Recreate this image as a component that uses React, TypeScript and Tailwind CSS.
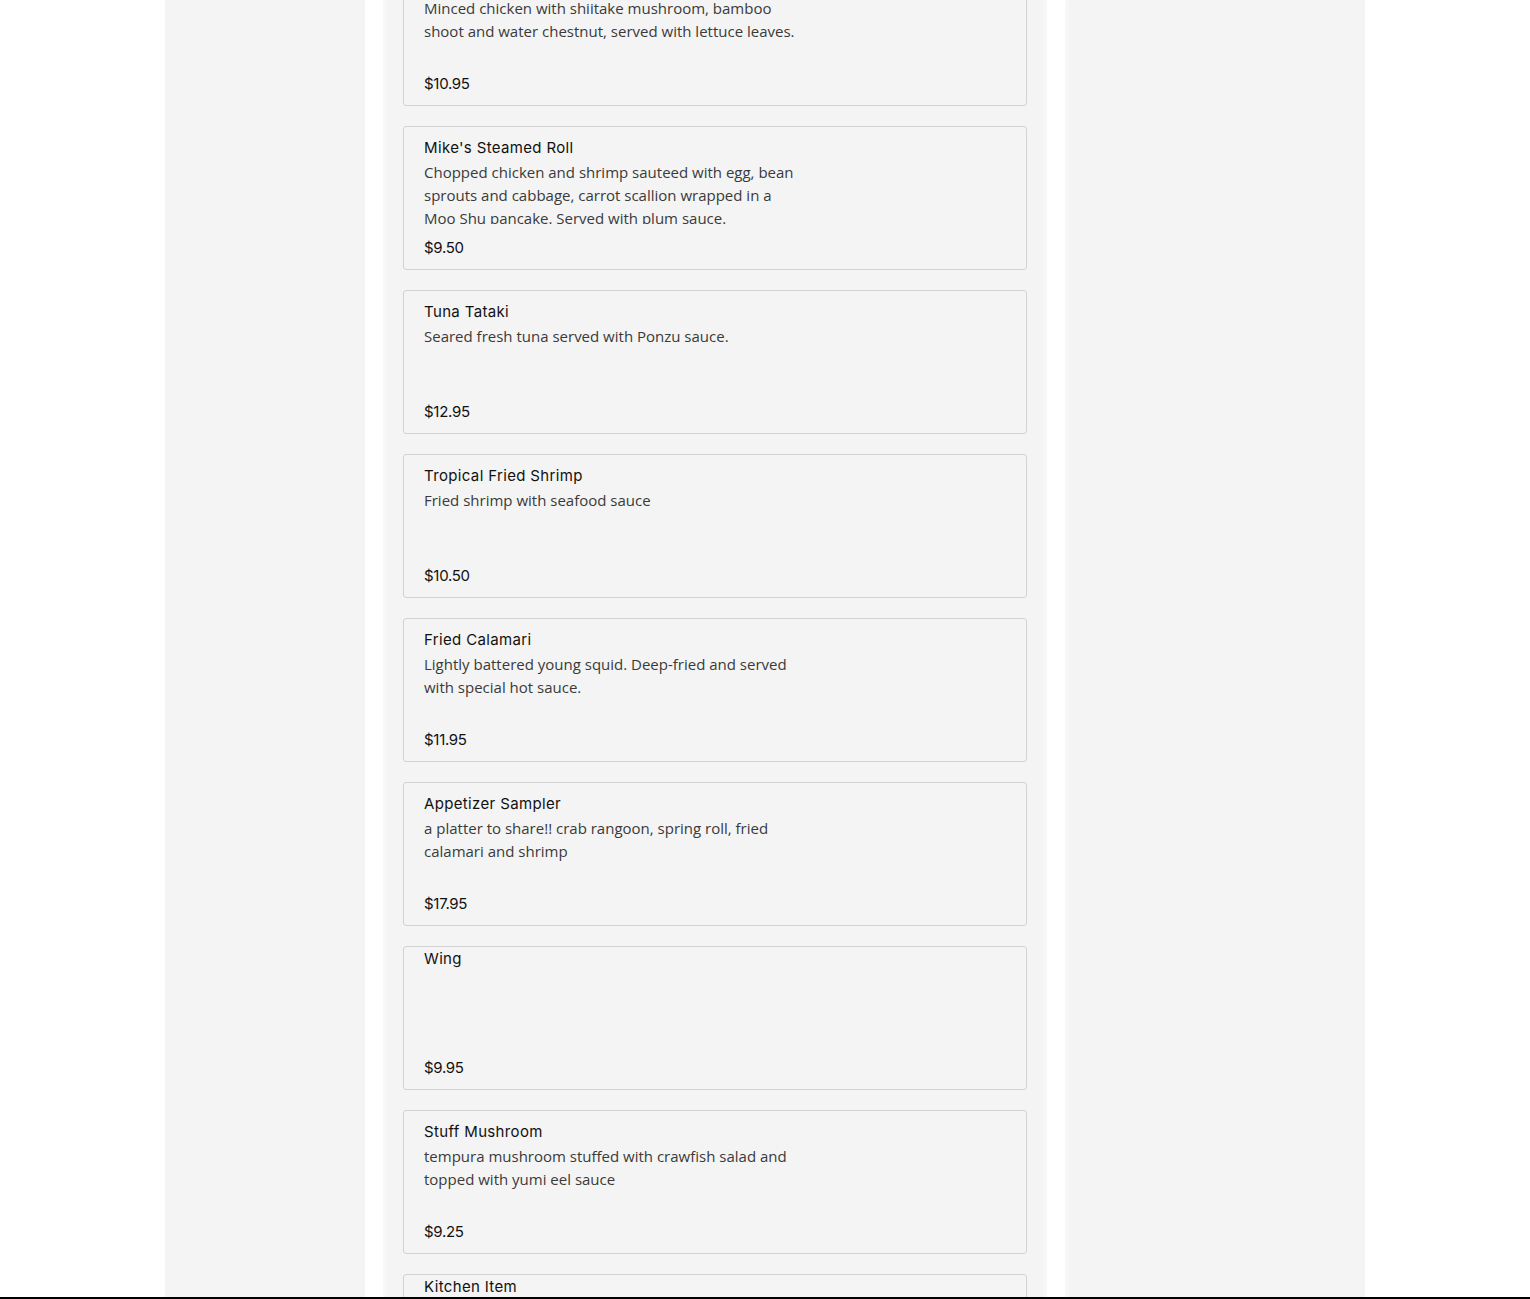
import React from 'react';

interface MenuItem {
  name: string;
  description?: string;
  price: string;
}

const items: MenuItem[] = [
  {
    name: "Chicken Lettuce Wrap",
    description: "Minced chicken with shiitake mushroom, bamboo shoot and water chestnut, served with lettuce leaves.",
    price: "$10.95"
  },
  {
    name: "Mike's Steamed Roll",
    description: "Chopped chicken and shrimp sauteed with egg, bean sprouts and cabbage, carrot scallion wrapped in a Moo Shu pancake. Served with plum sauce.",
    price: "$9.50"
  },
  { name: "Tuna Tataki", description: "Seared fresh tuna served with Ponzu sauce.", price: "$12.95" },
  { name: "Tropical Fried Shrimp", description: "Fried shrimp with seafood sauce", price: "$10.50" },
  {
    name: "Fried Calamari",
    description: "Lightly battered young squid. Deep-fried and served with special hot sauce.",
    price: "$11.95"
  },
  {
    name: "Appetizer Sampler",
    description: "a platter to share!! crab rangoon, spring roll, fried calamari and shrimp",
    price: "$17.95"
  },
  { name: "Wing", price: "$9.95" },
  {
    name: "Stuff Mushroom",
    description: "tempura mushroom stuffed with crawfish salad and topped with yumi eel sauce",
    price: "$9.25"
  },
  { name: "Kitchen Item", price: "" }
];

const heading = { fontFamily: "Inter, 'Open Sans', sans-serif" };
const body = { fontFamily: "'Open Sans', 'Liberation Sans', sans-serif" };

const MenuCard: React.FC<{ item: MenuItem }> = ({ item }) => {
  const noDesc = item.description === undefined;
  return (
    <div
      className={`h-[144px] shrink-0 flex flex-col bg-[#f4f4f4] border border-[#d2d2d2] rounded-[3px] px-5 pb-[11px] ${noDesc ? 'pt-[2px]' : 'pt-[11px]'}`}
    >
      <h3 className="text-[15px] leading-[20px] font-normal text-[#111] tracking-[0.35px]" style={heading}>
        {item.name}
      </h3>
      {!noDesc && (
        <p
          className="mt-[3px] w-[375px] h-[63px] overflow-hidden text-[15px] leading-[23px] text-[#3a3a3a]"
          style={body}
        >
          {item.description}
        </p>
      )}
      <div className="mt-auto text-[15px] leading-[20px] font-normal text-[#111] tracking-[-0.3px]" style={heading}>
        {item.price}
      </div>
    </div>
  );
};

export default function App() {
  return (
    <div className="h-[1299px] overflow-hidden bg-white">
      <div className="w-[1200px] mx-auto flex gap-[18px] h-full">
        <aside className="w-[200px] shrink-0 bg-[#f4f4f4]" />
        <main className="w-[664px] shrink-0 bg-[#f4f4f4] px-5 shadow-[inset_6px_0_4px_-4px_#fafafa,inset_-6px_0_4px_-4px_#fafafa]">
          <div className="flex flex-col gap-5 -mt-[38px]">
            {items.map((item, i) => (
              <MenuCard key={i} item={item} />
            ))}
          </div>
        </main>
        <aside className="w-[300px] shrink-0 bg-[#f4f4f4] shadow-[inset_6px_0_4px_-4px_#fafafa]" />
      </div>
      <div className="fixed bottom-0 inset-x-0 h-[2px] bg-black" />
    </div>
  );
}
